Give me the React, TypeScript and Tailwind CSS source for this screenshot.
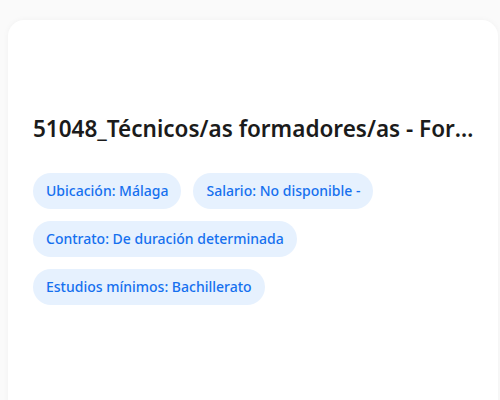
export default function App() {
  const tags = [
    'Ubicación: Málaga',
    'Salario: No disponible -',
    'Contrato: De duración determinada',
    'Estudios mínimos: Bachillerato',
  ];

  return (
    <div className="h-[400px] w-[500px] overflow-hidden bg-[#fafafa] pt-5 pl-2 pr-[2px] font-['Noto_Sans',sans-serif]">
      <div className="h-[420px] rounded-2xl bg-white pl-[25px] pr-[22px] shadow-[0_0_6px_rgba(0,0,0,0.04)]">
        {/* logo area, empty */}
        <div className="h-[93px]" />
        <h2 className="truncate text-[22.5px] font-semibold leading-8 text-[#1b1b1b]">
          51048_Técnicos/as formadores/as - Formación profesional para el empleo
        </h2>
        <div className="mt-[28px] flex flex-wrap gap-3">
          {tags.map((tag) => (
            <span
              key={tag}
              className="rounded-full bg-[#e6f1fe] px-[13px] py-2 text-sm font-medium leading-5 text-[#1570ef]"
            >
              {tag}
            </span>
          ))}
        </div>
      </div>
    </div>
  );
}
